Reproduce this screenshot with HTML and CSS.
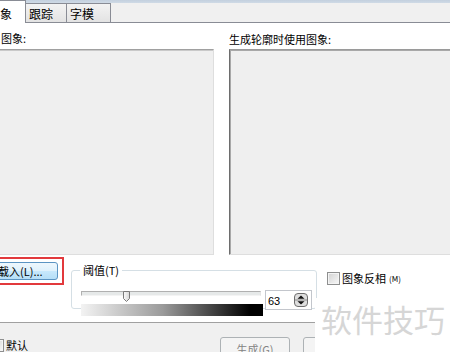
FILE: index.html
```html
<!DOCTYPE html>
<html lang="zh">
<head>
    <meta charset="UTF-8">
    <title>图象</title>
    <link rel="stylesheet" href="styles.css">
</head>
<body>
    <div class="tabs">
        <div class="tab active">图象</div>
        <div class="tab">跟踪</div>
        <div class="tab">字模</div>
    </div>

    <div class="panel">
        <div class="captions">
            <span class="cap-left">图象:</span>
            <span class="cap-right">生成轮廓时使用图象:</span>
        </div>

        <div class="views">
            <div class="view source"></div>
            <div class="view result"></div>
        </div>

        <div class="controls">
            <div class="highlight">
                <button class="btn load">载入(L)...</button>
            </div>

            <div class="group">
                <span class="group-title">阈值(T)</span>
                <div class="group-body">
                    <div class="range">
                        <div class="slider">
                            <div class="track"></div>
                            <svg class="thumb" style="left: 42px" width="7" height="11" viewBox="0 0 7 11">
                                <defs>
                                    <linearGradient id="tg" x1="0" y1="0" x2="1" y2="0">
                                        <stop offset="0" stop-color="#fbfbfb"/>
                                        <stop offset="1" stop-color="#d6d6d6"/>
                                    </linearGradient>
                                </defs>
                                <path d="M0.5 0.5 H6.5 V7.5 L3.5 10.5 L0.5 7.5 Z" fill="url(#tg)" stroke="#7a7a7a"/>
                            </svg>
                        </div>
                        <div class="ramp"></div>
                    </div>
                    <div class="spin">
                        <span class="spin-value">63</span>
                        <svg class="spin-btn" width="14" height="14" viewBox="0 0 14 14">
                            <rect x="0.5" y="0.5" width="13" height="13" rx="3.5" fill="#dedede" stroke="#6e6e6e"/>
                            <line x1="1" y1="7" x2="13" y2="7" stroke="#8a8a8a"/>
                            <path d="M7 2.5 L10.5 5.8 H3.5 Z" fill="#111"/>
                            <path d="M7 11.5 L10.5 8.2 H3.5 Z" fill="#111"/>
                        </svg>
                    </div>
                </div>
            </div>

            <label class="check invert"><span class="box"></span>图象反相<small>(M)</small></label>
        </div>
    </div>

    <div class="footer">
        <label class="check default"><span class="box"></span>默认</label>
        <button class="btn plain" disabled>生成(G)</button>
        <button class="btn plain wide" disabled></button>
    </div>

    <div class="watermark">软件技巧</div>
</body>
</html>
```

FILE: styles.css
```css
body {
    margin: 0;
    width: 450px;
    height: 352px;
    overflow: hidden;
    position: relative;
    font-family: "Noto Sans CJK SC", "Liberation Sans", sans-serif;
    font-size: 11px;
    color: #000;
    background-color: #f0f0f0;
}
.tabs {
    display: flex;
    height: 22px;
    border-bottom: 1px solid #898c95;
    background: linear-gradient(#c3d0de 0, #cfdae6 3px, #f0f0f0 3px);
}
.tab {
    box-sizing: border-box;
    height: 19px;
    margin-top: 3px;
    margin-left: -1px;
    padding: 2px 0 0 3px;
    font-size: 12px;
    line-height: 16px;
    border: 1px solid #898c95;
    border-bottom: 0;
    background: linear-gradient(#f3f3f3, #e3e3e3);
}
.tab:nth-child(2) {
    width: 42px;
}
.tab:nth-child(3) {
    width: 45px;
}
.tab.active {
    position: relative;
    z-index: 1;
    width: 44px;
    height: 23px;
    margin: 0 0 -1px -18px;
    padding: 5px 0 0 5px;
    background: #fff;
}
.panel {
    height: 299px;
    background: #fff;
    border-bottom: 1px solid #a0a0a0;
}
.captions {
    display: flex;
    padding-top: 9px;
    line-height: 13px;
}
.cap-left {
    width: 213px;
    padding-left: 1px;
}
.cap-right {
    margin-left: 15px;
    padding-top: 1px;
}
.views {
    display: flex;
    gap: 15px;
    margin-top: 3px;
    height: 206px;
}
.view {
    box-sizing: border-box;
    background: #efefef;
    border: 1px solid;
    border-color: #a0a0a0 #dedede #dedede #a0a0a0;
    box-shadow: inset 1px 1px 0 #c9c9c9;
}
.source {
    width: 224px;
    margin-left: -10px;
}
.result {
    flex: 1;
    margin-right: -10px;
    border-color: #9a9a9a #dedede #dedede #6d6d6d;
    box-shadow: inset 1px 1px 0 #a8a8a8;
}
.controls {
    display: flex;
    align-items: flex-start;
}
.highlight {
    margin: 2px 0 0 -10px;
    padding: 3px 4px 3px 0;
    border: 2px solid #e2393c;
    border-left: 0;
}
.btn {
    box-sizing: border-box;
    font-family: inherit;
    font-size: 11px;
    border-radius: 3px;
    padding: 0;
}
.load {
    display: block;
    width: 68px;
    height: 18px;
    padding-left: 7px;
    text-align: left;
    line-height: 15px;
    color: #000;
    border: 1px solid #5b94c3;
    background: linear-gradient(#eef7fd 0%, #dff1fc 50%, #c7e8fc 52%, #b5def7 100%);
}
.group {
    box-sizing: border-box;
    width: 246px;
    height: 39px;
    margin: 15px 0 0 7px;
    border: 1px solid #d5dfe5;
    border-radius: 3px;
}
.group-title {
    display: inline-block;
    margin: -7px 0 0 8px;
    padding: 0 3px;
    line-height: 13px;
    background: #fff;
    vertical-align: top;
}
.group-body {
    display: flex;
    margin-top: 2px;
    padding-left: 9px;
}
.range {
    width: 182px;
}
.slider {
    position: relative;
    height: 11px;
}
.track {
    box-sizing: border-box;
    width: 180px;
    height: 5px;
    margin-top: 2px;
    border: 1px solid;
    border-color: #b0b0b0 #e4e4e4 #f4f4f4 #b0b0b0;
    background: #e6e9e9;
}
.thumb {
    position: absolute;
    top: 0;
}
.ramp {
    height: 12px;
    margin-top: 2px;
    background: linear-gradient(to right, #f3f3f3 0%, #9a9a9a 45%, #000 93%, #000 100%);
}
.spin {
    box-sizing: border-box;
    display: flex;
    align-items: center;
    width: 47px;
    height: 20px;
    margin: 1px 0 0 2px;
    padding: 0 3px 0 2px;
    border: 1px solid #c3c6cc;
    background: #fff;
}
.spin-value {
    font-family: "Liberation Sans", sans-serif;
    font-size: 11px;
    flex: 1;
    padding-top: 1px;
}
.check {
    display: flex;
    align-items: center;
    gap: 2px;
    line-height: 13px;
}
.box {
    box-sizing: border-box;
    width: 13px;
    height: 13px;
    border: 1px solid #8e8f8f;
    background: linear-gradient(135deg, #d2d2d2, #f8f8f8);
    box-shadow: inset 0 0 0 1px #f4f4f4;
}
.invert {
    margin: 17px 0 0 10px;
}
.invert small {
    font-size: 8px;
    margin-left: 1px;
}
.footer {
    display: flex;
    align-items: flex-start;
}
.default {
    width: 229px;
    margin: 16px 0 0 -9px;
}
.plain {
    width: 70px;
    height: 23px;
    margin-top: 14px;
    color: #838383;
    border: 1px solid #adb2b5;
    background: #f4f4f4;
}
.wide {
    width: 75px;
    margin-left: 13px;
}
.watermark {
    position: absolute;
    left: 315px;
    top: 298px;
    width: 135px;
    height: 54px;
    box-sizing: border-box;
    padding: 5px 0 0 6px;
    font-size: 31px;
    line-height: 31px;
    color: #d6d6d6;
    background: #fff;
}
```
